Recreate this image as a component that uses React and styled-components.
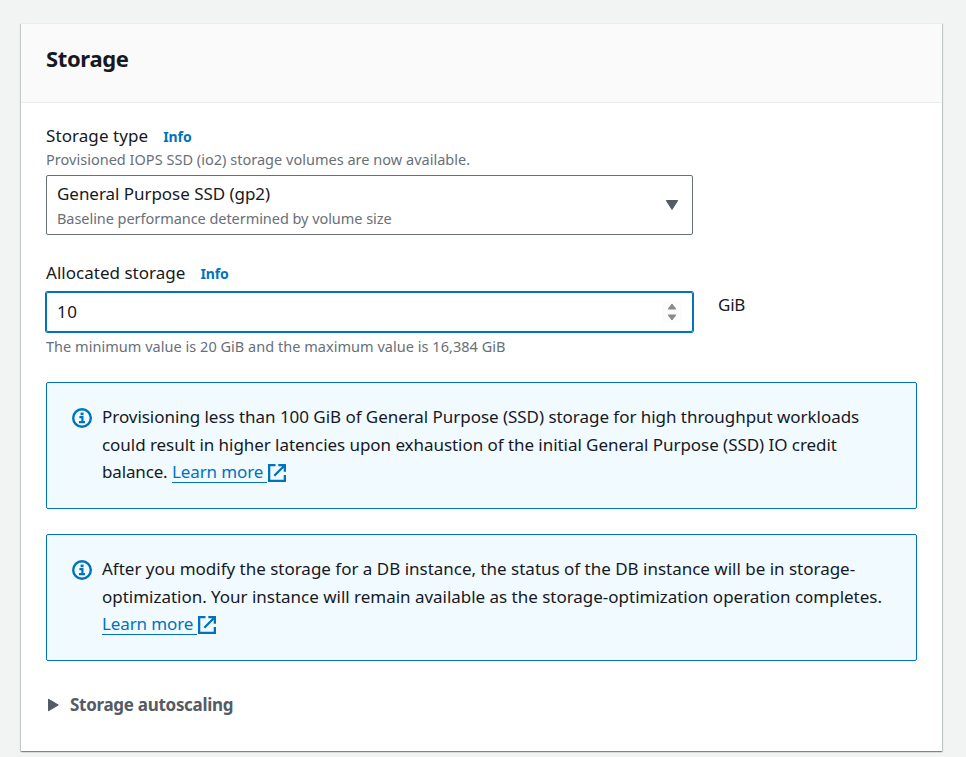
import React from 'react';
import styled, { createGlobalStyle } from 'styled-components';

const GlobalStyle = createGlobalStyle`
  *, *::before, *::after { box-sizing: border-box; }
  body {
    margin: 0;
    background: #f2f3f3;
    color: #16191f;
    font-family: "Noto Sans", "Open Sans", sans-serif;
    font-size: 17px;
    overflow: hidden;
  }
`;

const Page = styled.main`
  height: 757px;
  padding: 23px 24px 0 21px;
`;

const Card = styled.section`
  height: 728px;
  background: #fff;
  border-top: 1px solid #eaeded;
  box-shadow: 0 1px 1px 0 rgba(0, 28, 36, 0.3), 1px 1px 1px 0 rgba(0, 28, 36, 0.15),
    -1px 1px 1px 0 rgba(0, 28, 36, 0.15);
`;

const CardHeader = styled.header`
  height: 79px;
  padding: 19px 25px;
  background: #fafafa;
  border-bottom: 1px solid #eaeded;
`;

const Title = styled.h2`
  margin: 0;
  font-size: 22px;
  line-height: 30px;
  font-weight: 700;
  letter-spacing: -0.35px;
`;

const CardBody = styled.div`
  display: flex;
  flex-direction: column;
  padding: 19px 25px 0;
`;

const Field = styled.div`
  margin-bottom: ${(p) => p.$gap}px;
`;

const LabelRow = styled.div`
  display: flex;
  align-items: baseline;
  gap: 15px;
  height: 27px;
  line-height: 27px;
  margin-bottom: ${(p) => p.$gap || 0}px;
`;

const Label = styled.span`
  letter-spacing: ${(p) => p.$tracking || 0}px;
`;

const InfoLink = styled.a`
  color: #0073bb;
  font-size: 14px;
  font-weight: 700;
  letter-spacing: -0.1px;
`;

const Hint = styled.div`
  color: #687078;
  font-size: 14.5px;
  line-height: 20px;
  white-space: nowrap;
  letter-spacing: ${(p) => p.$tracking || 0}px;
`;

const Constraint = styled(Hint)`
  margin-top: 4px;
`;

const Select = styled.div`
  display: flex;
  align-items: center;
  justify-content: space-between;
  width: 647px;
  height: 60px;
  margin-top: 6px;
  padding: 0 13px 0 10px;
  border: 1px solid #687078;
  border-radius: 2px;
`;

const SelectText = styled.div`
  padding-bottom: 2px;
`;

const SelectValue = styled.div`
  line-height: 27px;
  letter-spacing: -0.04px;
`;

const SelectDescription = styled(Hint)`
  line-height: 22px;
`;

const InputRow = styled.div`
  display: flex;
  gap: 25px;
`;

const NumberInput = styled.div`
  display: flex;
  align-items: center;
  justify-content: space-between;
  width: 647px;
  height: 40px;
  padding: 0 10px 1px 10px;
  border: 1px solid #0073bb;
  border-radius: 2px;
  box-shadow: 0 0 0 1px #0073bb;
`;

const InputValue = styled.span`
  letter-spacing: 0.5px;
`;

const Spinner = styled.div`
  display: flex;
  flex-direction: column;
  align-items: center;
  justify-content: center;
  gap: 4px;
  width: 20px;
  height: 22px;
  margin-top: 1px;
  background: #fcfcfc;
`;

const Unit = styled.span`
  line-height: 25px;
  letter-spacing: -0.2px;
`;

const Alert = styled.div`
  display: flex;
  gap: 10px;
  height: 127px;
  margin-bottom: ${(p) => p.$gap}px;
  padding: 20px 25px;
  background: #f1faff;
  border: 1px solid #0073bb;
  border-radius: 2px;
`;

const InfoIconBox = styled.span`
  display: flex;
  flex: none;
  width: 20px;
  height: 20px;
  margin-top: 5px;
`;

const AlertText = styled.div`
  line-height: 27.5px;
  white-space: nowrap;
`;

const Line = styled.div`
  display: flex;
  letter-spacing: ${(p) => p.$tracking || 0}px;
`;

const ExternalLink = styled.a`
  display: flex;
  color: #0073bb;
  margin-left: ${(p) => p.$indent || 0}px;
`;

const LinkText = styled.span`
  height: 25px;
  width: 95px;
  letter-spacing: -0.12px;
  border-bottom: 1px solid #0073bb;
`;

const LinkIconBox = styled.span`
  display: flex;
  width: 18px;
  height: 18px;
  margin: 6px 0 0 1px;
`;

const Expander = styled.div`
  display: flex;
  align-items: center;
  gap: 10px;
  padding-left: 1px;
  color: #545b64;
  font-weight: 700;
  line-height: 27px;
  letter-spacing: -0.29px;
`;

const Triangle = ({ width, height, points, color = '#545b64' }) => (
  <svg width={width} height={height} viewBox={`0 0 ${width} ${height}`}>
    <polygon points={points} fill={color} stroke={color} strokeWidth="1" strokeLinejoin="round" />
  </svg>
);

const InfoIcon = () => (
  <InfoIconBox>
    <svg width="20" height="20" viewBox="0 0 20 20" fill="none" stroke="#0073bb">
      <circle cx="10" cy="10" r="8.8" strokeWidth="2.4" />
      <path d="M7.4 9.2H10.4V14M7 14.2H13" strokeWidth="2.2" />
      <path d="M10.1 4.6V7.2" strokeWidth="3" />
    </svg>
  </InfoIconBox>
);

const ExternalIcon = () => (
  <LinkIconBox>
    <svg width="18" height="18" viewBox="0 0 18 18" fill="none" stroke="#0073bb" strokeWidth="2.3">
      <path d="M7.5 1.15H1.15V16.85H16.85V11" />
      <path d="M10.3 1.15H16.85V7.7M16.5 1.5L6.3 11.7" />
    </svg>
  </LinkIconBox>
);

const LearnMore = ({ indent }) => (
  <ExternalLink $indent={indent}>
    <LinkText>Learn more</LinkText>
    <ExternalIcon />
  </ExternalLink>
);

export default function App() {
  return (
    <>
      <GlobalStyle />
      <Page>
        <Card>
          <CardHeader>
            <Title>Storage</Title>
          </CardHeader>
          <CardBody>
            <Field $gap={24}>
              <LabelRow>
                <Label $tracking={0.08}>Storage type</Label>
                <InfoLink>Info</InfoLink>
              </LabelRow>
              <Hint $tracking={0.02}>Provisioned IOPS SSD (io2) storage volumes are now available.</Hint>
              <Select>
                <SelectText>
                  <SelectValue>General Purpose SSD (gp2)</SelectValue>
                  <SelectDescription $tracking={-0.05}>
                    Baseline performance determined by volume size
                  </SelectDescription>
                </SelectText>
                <Triangle width={14} height={12} points="1.3,1.5 12.7,1.5 7,10.5" />
              </Select>
            </Field>
            <Field $gap={26}>
              <LabelRow $gap={6}>
                <Label $tracking={0.02}>Allocated storage</Label>
                <InfoLink>Info</InfoLink>
              </LabelRow>
              <InputRow>
                <NumberInput>
                  <InputValue>10</InputValue>
                  <Spinner>
                    <Triangle width={10} height={7} points="1.2,6 8.8,6 5,1" color="#8a8a8a" />
                    <Triangle width={10} height={7} points="1.2,1 8.8,1 5,6" color="#8a8a8a" />
                  </Spinner>
                </NumberInput>
                <Unit>GiB</Unit>
              </InputRow>
              <Constraint $tracking={0.03}>
                The minimum value is 20 GiB and the maximum value is 16,384 GiB
              </Constraint>
            </Field>
            <Alert $gap={25}>
              <InfoIcon />
              <AlertText>
                <Line $tracking={-0.04}>
                  Provisioning less than 100 GiB of General Purpose (SSD) storage for high throughput workloads
                </Line>
                <Line $tracking={-0.05}>
                  could result in higher latencies upon exhaustion of the initial General Purpose (SSD) IO credit
                </Line>
                <Line $tracking={-0.15}>
                  balance.
                  <LearnMore indent={4.5} />
                </Line>
              </AlertText>
            </Alert>
            <Alert $gap={30}>
              <InfoIcon />
              <AlertText>
                <Line $tracking={-0.01}>
                  After you modify the storage for a DB instance, the status of the DB instance will be in storage-
                </Line>
                <Line $tracking={-0.02}>
                  optimization. Your instance will remain available as the storage-optimization operation completes.
                </Line>
                <Line>
                  <LearnMore />
                </Line>
              </AlertText>
            </Alert>
            <Expander>
              <Triangle width={13} height={14} points="1.5,1.2 1.5,12.8 11.3,7" />
              Storage autoscaling
            </Expander>
          </CardBody>
        </Card>
      </Page>
    </>
  );
}
